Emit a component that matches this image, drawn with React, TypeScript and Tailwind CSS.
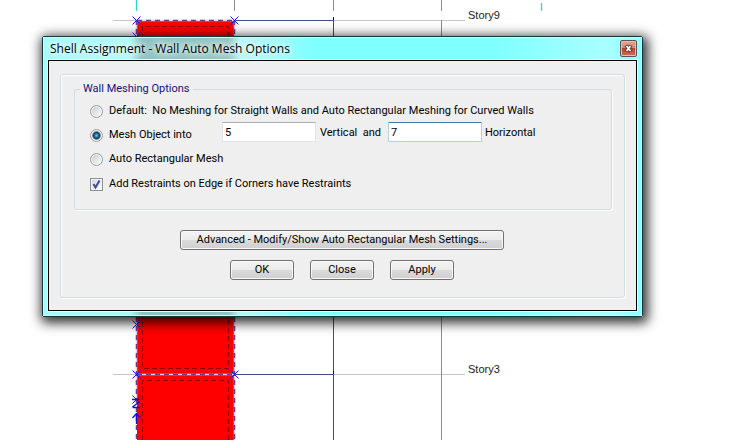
import { useState } from "react";
import type { ReactNode } from "react";

type MeshMode = "default" | "object" | "auto";

export default function App() {
  return (
    <main className="relative min-h-screen overflow-hidden bg-white pt-9 pr-[89px] pb-10 pl-[42px] font-['Roboto',sans-serif] text-[11px] leading-4 text-black">
      <ElevationView />
      <MeshDialog />
    </main>
  );
}

// small "x" shaped joint marker
function Joint({ x, y }: { x: number; y: number }) {
  return (
    <path
      d={`M${x - 4} ${y - 4}l8 8M${x + 4} ${y - 4}l-8 8`}
      stroke="#1c10d8"
      fill="none"
    />
  );
}

function ElevationView() {
  return (
    <svg
      className="absolute top-0 left-0"
      width="732"
      height="440"
      viewBox="0 0 732 440"
      aria-hidden="true"
    >
      {/* grid stubs above the top story */}
      <path d="M136.500 0V11M541.500 3V11" stroke="#30d5da" strokeWidth="1.300" />
      <path d="M234.500 0V11M333.500 0V11M441.500 0V11" stroke="#8c8c8c" />

      {/* story and grid lines */}
      <path d="M113 20.500H465M113 374.500H465" stroke="#c6c6c6" />
      <path d="M441.500 20V440" stroke="#8c8c8c" />
      <path
        d="M234 20.500H333.500M234 374.500H333.500M333.500 20V440"
        stroke="#3d4c8c"
      />
      <path d="M333.500 17V20M333.500 371V374" stroke="#101018" />

      {/* wall */}
      <rect x="137" y="20" width="98" height="420" fill="#ff0000" />
      <path
        d="M142.500 440V380.500H228.500V440M142.500 26V368.500H228.500V26.500H142.500"
        stroke="#8a0000"
        strokeDasharray="5 3"
        fill="none"
      />
      <g fill="none">
        <path
          d="M137 20.500H234M137 374.500H234M136.500 20V400M234.500 20V440"
          stroke="#ead0e4"
          strokeWidth="1.500"
        />
        <path
          d="M137 20.500H234M137 374.500H234M136.500 20V440M234.500 20V440"
          stroke="#6a3a86"
          strokeWidth="1.500"
          strokeDasharray="5 4"
        />
      </g>

      <Joint x={136.5} y={20.5} />
      <Joint x={234.5} y={20.5} />
      <Joint x={136.5} y={36.5} />
      <Joint x={136.5} y={324.5} />
      <Joint x={136.5} y={374.5} />
      <Joint x={234.5} y={374.5} />
      <Joint x={136.5} y={399.5} />
      <path
        d="M132 399.500H140M132.500 407.500H140M132.500 407L139 402M132.500 418L136.500 413.500L140.500 418M136.500 414V424"
        stroke="#1010d8"
        strokeWidth="1.300"
        fill="none"
      />

      <g
        fill="#222222"
        fontSize="11"
        fontFamily="'Liberation Sans', Arial, sans-serif"
      >
        <text x="468" y="19">
          Story9
        </text>
        <text x="468" y="373">
          Story3
        </text>
      </g>
    </svg>
  );
}

function MeshDialog() {
  const [mode, setMode] = useState<MeshMode>("object");
  const [vertical, setVertical] = useState("5");
  const [horizontal, setHorizontal] = useState("7");
  const [restraints, setRestraints] = useState(true);

  return (
    <div
      role="dialog"
      aria-labelledby="dialog-title"
      className="relative rounded-[2px] border border-[#143838] shadow-[2px_3px_12px_3px_rgba(0,0,0,0.8)]"
    >
      <div className="border border-[#c4ffff] bg-[#86ffff] bg-[linear-gradient(90deg,transparent_86px,#6e8f8d80_98px,#6e8f8d80_184px,transparent_196px),linear-gradient(90deg,#a4fafa_0px,#b4f8f6_200px,#80ffff_270px,#80ffff_450px,#a8ffff_560px,#90ffff_100%)] px-[3px] pb-[3px]">
        <div className="flex h-[21px] items-center justify-between pr-px pl-[3px]">
          <h1
            id="dialog-title"
            className="font-['Open_Sans',sans-serif] text-[12px] whitespace-nowrap [text-shadow:0_0_4px_#ffffff,0_0_8px_#ffffff,0_0_12px_#ffffff]"
          >
            Shell Assignment - Wall Auto Mesh Options
          </h1>
          <CloseButton />
        </div>

        <div className="border border-[#e4ffff]">
          <form
            className="border border-black bg-[#efefef] px-[11px] pt-[13px] pb-3"
            onSubmit={(e) => e.preventDefault()}
          >
            <div className="rounded-[3px] border border-[#d3dce2] pt-[6px] pr-3 pb-[17px] pl-[13px] shadow-[1px_1px_0_#ffffff,inset_1px_1px_0_#ffffff]">
              <fieldset className="rounded-[3px] border border-[#d3dce2] pt-[3px] pr-2 pb-[11px] pl-[15px] shadow-[1px_1px_0_#ffffff]">
                <legend className="-ml-[10px] px-[3px] text-[#12127c]">
                  Wall Meshing Options
                </legend>

                <div className="flex h-[22px] items-center">
                  <RadioOption
                    value="default"
                    mode={mode}
                    onSelect={setMode}
                  >
                    Default:{"  "}No Meshing for Straight Walls and Auto
                    Rectangular Meshing for Curved Walls
                  </RadioOption>
                </div>

                <div className="flex h-[26px] items-start">
                  <div className="flex h-full w-[132px] items-center">
                    <RadioOption value="object" mode={mode} onSelect={setMode}>
                      Mesh Object into
                    </RadioOption>
                  </div>
                  <input
                    id="vertical"
                    value={vertical}
                    onChange={(e) => setVertical(e.target.value)}
                    className="h-5 w-[94px] border border-[#e0e3e8] border-t-[#abadb3] bg-white px-[2px] outline-none"
                  />
                  <label
                    htmlFor="vertical"
                    className="flex h-[22px] w-[72px] items-center pl-1 whitespace-pre"
                  >
                    Vertical{"  "}and
                  </label>
                  <input
                    id="horizontal"
                    value={horizontal}
                    onChange={(e) => setHorizontal(e.target.value)}
                    className="h-5 w-[94px] rounded-[1px] border border-[#b5cfe7] border-t-[#3d7bad] bg-white px-[2px] outline-none"
                  />
                  <label
                    htmlFor="horizontal"
                    className="flex h-[22px] items-center pl-[3px]"
                  >
                    Horizontal
                  </label>
                </div>

                <div className="flex h-[22px] items-center">
                  <RadioOption value="auto" mode={mode} onSelect={setMode}>
                    Auto Rectangular Mesh
                  </RadioOption>
                </div>

                <div className="flex h-7 items-center">
                  <label className="relative flex items-center gap-[6px]">
                    <input
                      type="checkbox"
                      checked={restraints}
                      onChange={(e) => setRestraints(e.target.checked)}
                      className="peer size-[13px] appearance-none border border-[#8e8f8f] bg-linear-to-br from-[#cfd4da] to-white shadow-[inset_0_0_0_1px_#f4f4f4]"
                    />
                    <svg
                      className="pointer-events-none absolute left-0 hidden size-[13px] peer-checked:block"
                      viewBox="0 0 13 13"
                      aria-hidden="true"
                    >
                      <path
                        d="M3.500 6L5.500 9.500L9.500 2.500"
                        fill="none"
                        stroke="#3c4f96"
                        strokeWidth="2"
                      />
                    </svg>
                    Add Restraints on Edge if Corners have Restraints
                  </label>
                </div>
              </fieldset>

              <div className="mt-5 flex flex-col items-center gap-[10px] pr-[2px]">
                <PushButton className="w-[324px]">
                  Advanced - Modify/Show Auto Rectangular Mesh Settings...
                </PushButton>
                <div className="flex gap-4">
                  <PushButton className="w-16">OK</PushButton>
                  <PushButton className="w-16">Close</PushButton>
                  <PushButton className="w-16">Apply</PushButton>
                </div>
              </div>
            </div>
          </form>
        </div>
      </div>
    </div>
  );
}

function CloseButton() {
  return (
    <button
      type="button"
      aria-label="Close window"
      className="flex h-[17px] w-[17px] items-center justify-center rounded-[2px] border border-[#5d5555] bg-[linear-gradient(#e5a797,#d98470_45%,#bb3f2a_50%,#d0705a)] shadow-[inset_0_0_0_1px_#efb9aa]"
    >
      <svg width="9" height="9" viewBox="0 0 9 9" aria-hidden="true">
        <path
          d="M2 1.500L7 7.500M7 1.500L2 7.500"
          stroke="#4a3c48"
          strokeWidth="3.500"
        />
        <path d="M2.500 2L6.500 7M6.500 2L2.500 7" stroke="#ffffff" strokeWidth="1.700" />
      </svg>
    </button>
  );
}

function RadioOption({
  value,
  mode,
  onSelect,
  children,
}: {
  value: MeshMode;
  mode: MeshMode;
  onSelect: (mode: MeshMode) => void;
  children: ReactNode;
}) {
  return (
    <label className="flex items-center gap-[6px] whitespace-pre">
      <input
        type="radio"
        name="mesh-mode"
        value={value}
        checked={mode === value}
        onChange={() => onSelect(value)}
        className="size-[13px] appearance-none rounded-full border border-[#9a9da0] bg-linear-to-br from-[#c4c8cc] to-white shadow-[inset_0_0_0_1px_#f4f4f4] checked:bg-[radial-gradient(circle_at_center,#5cc0e8_0px,#2377a4_2px,#12324f_3px,#d8e4ea_5px)]"
      />
      <span>{children}</span>
    </label>
  );
}

function PushButton({
  className,
  children,
}: {
  className: string;
  children: ReactNode;
}) {
  return (
    <button
      type="button"
      className={`flex h-5 items-center justify-center rounded-[3px] border border-[#707070] bg-[linear-gradient(#f3f3f3,#ebebeb_50%,#dbdbdb_50%,#cfcfcf)] whitespace-nowrap shadow-[inset_0_0_0_1px_#fafafa] ${className}`}
    >
      {children}
    </button>
  );
}
